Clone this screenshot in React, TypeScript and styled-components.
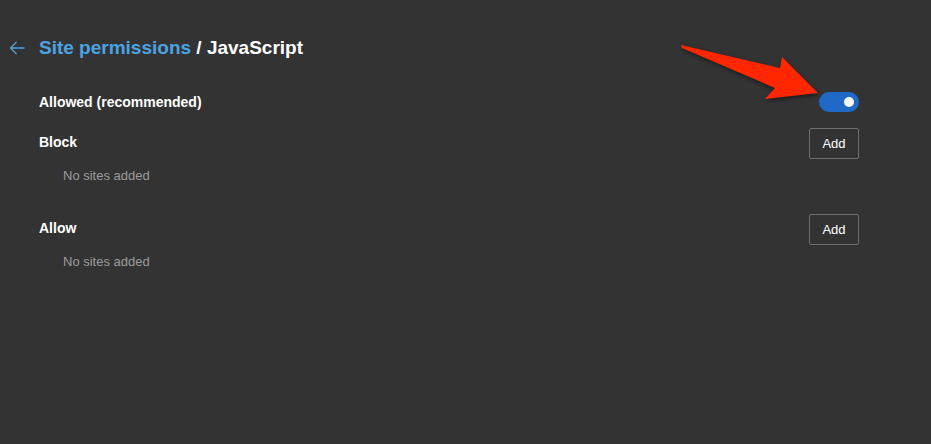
import React from 'react';
import styled, { createGlobalStyle } from 'styled-components';

const GlobalStyle = createGlobalStyle`
  html, body {
    margin: 0;
    padding: 0;
    background: #333333;
  }
  body {
    font-family: "Liberation Sans", Arial, sans-serif;
    -webkit-font-smoothing: antialiased;
  }
`;

const Page = styled.div`
  position: relative;
  width: 931px;
  height: 444px;
  background: #333333;
  overflow: hidden;
`;

const Header = styled.div`
  display: flex;
  align-items: center;
  gap: 14px;
  padding: 36px 0 0 9px;
  height: 24px;
`;

const BackButton = styled.button`
  display: flex;
  align-items: center;
  justify-content: center;
  width: 16px;
  height: 24px;
  padding: 0;
  border: none;
  background: none;
  cursor: pointer;
`;

const Title = styled.h1`
  margin: 0;
  font-size: 19px;
  line-height: 24px;
  font-weight: 700;
  color: #ffffff;
`;

const Crumb = styled.span`
  color: #4ba3e3;
`;

const Content = styled.div`
  display: flex;
  flex-direction: column;
  padding: 0 72px 0 39px;
`;

const Row = styled.div<{ $top: number; $height: number }>`
  display: flex;
  align-items: center;
  justify-content: space-between;
  margin-top: ${p => p.$top}px;
  height: ${p => p.$height}px;
`;

const Label = styled.div<{ $lift?: number }>`
  font-size: 14px;
  font-weight: 700;
  color: #ffffff;
  margin-bottom: ${p => p.$lift ?? 0}px;
`;

const Empty = styled.div`
  margin-top: 9px;
  padding-left: 24px;
  font-size: 13px;
  line-height: 16px;
  color: #9b9b9b;
`;

const AddButton = styled.button`
  width: 50px;
  height: 31px;
  padding: 0;
  background: transparent;
  border: 1px solid #6e6e6e;
  border-radius: 2px;
  font-family: "Liberation Sans", Arial, sans-serif;
  font-size: 13px;
  color: #ffffff;
  cursor: pointer;
`;

const Toggle = styled.div<{ $on: boolean }>`
  position: relative;
  width: 40px;
  height: 20px;
  border-radius: 10px;
  background: ${p => (p.$on ? '#2169c6' : '#555')};

  &::after {
    content: '';
    position: absolute;
    top: 5px;
    left: ${p => (p.$on ? '25px' : '5px')};
    width: 10px;
    height: 10px;
    border-radius: 50%;
    background: #ffffff;
  }
`;

const Callout = styled.svg`
  position: absolute;
  left: 675px;
  top: 35px;
  filter: drop-shadow(1px 2px 2px rgba(0, 0, 0, 0.45));
`;

const sections = [
  { name: 'Block', top: 16 },
  { name: 'Allow', top: 30 },
];

const App: React.FC = () => (
  <Page>
    <GlobalStyle />
    <Header>
      <BackButton aria-label="Back">
        <svg width="16" height="14" viewBox="0 0 16 14" fill="none" stroke="#4ba3e3" strokeWidth="1.3">
          <path d="M15.5 7H1.5M7.5 1L1.5 7l6 6" />
        </svg>
      </BackButton>
      <Title>
        <Crumb>Site permissions</Crumb> / JavaScript
      </Title>
    </Header>
    <Content>
      <Row $top={32} $height={20}>
        <Label>Allowed (recommended)</Label>
        <Toggle $on />
      </Row>
      {sections.map(s => (
        <React.Fragment key={s.name}>
          <Row $top={s.top} $height={31}>
            <Label $lift={3}>{s.name}</Label>
            <AddButton>Add</AddButton>
          </Row>
          <Empty>No sites added</Empty>
        </React.Fragment>
      ))}
    </Content>
    <Callout width="150" height="75" viewBox="0 0 150 75">
      <polygon
        points="6,10 105,33 107,22 143,58 90,64 100,53 7,13"
        fill="#ff2600"
        strokeLinejoin="round"
      />
    </Callout>
  </Page>
);

export default App;
